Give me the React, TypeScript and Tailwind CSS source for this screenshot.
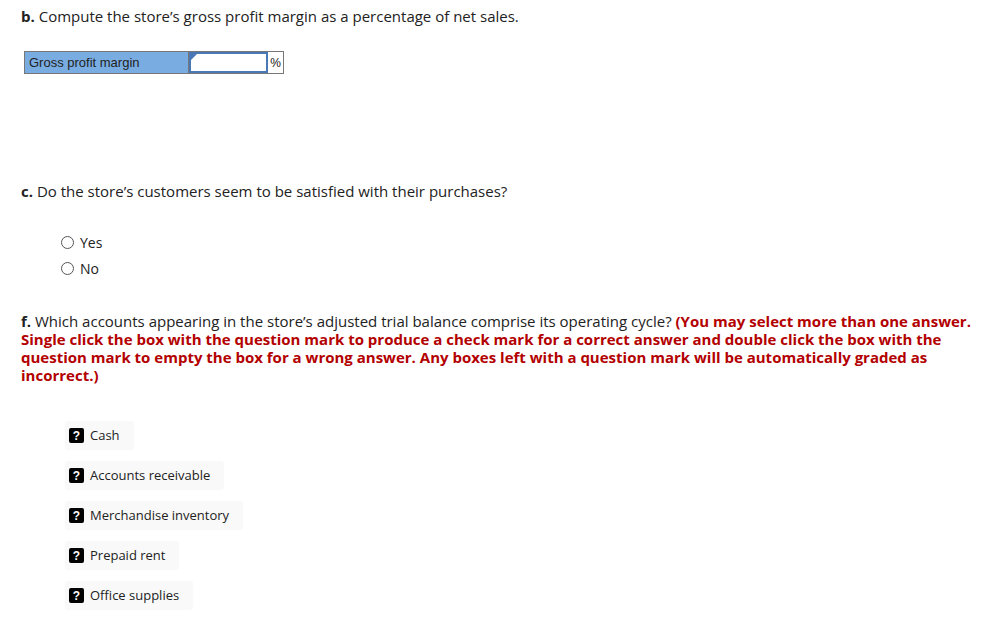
import React from "react";

const font = { fontFamily: "'Open Sans', Lato, sans-serif" };

function Q() {
  return (
    <span className="inline-flex items-center justify-center w-[15px] h-[15px] rounded-[2px] bg-black text-white text-[12px] font-bold leading-none" style={{ fontFamily: "'Liberation Sans', Arial, sans-serif" }}>
      ?
    </span>
  );
}

function Radio({ label }: { label: string }) {
  return (
    <div className="flex items-center h-[26px]">
      <span className="w-[13px] h-[13px] rounded-full border border-[#555] bg-white mr-[6px]" />
      <span className="text-[14px] text-[#222]">{label}</span>
    </div>
  );
}

const items = ["Cash", "Accounts receivable", "Merchandise inventory", "Prepaid rent", "Office supplies"];

export default function App() {
  return (
    <div className="w-[997px] h-[637px] bg-white text-[#222] overflow-hidden" style={font}>
      <div className="pl-[21px] pt-[6px]">
        <p className="text-[15px] leading-[20px]">
          <b>b.</b> Compute the store’s gross profit margin as a percentage of net sales.
        </p>
        <div className="mt-[25px] ml-[3px] flex h-[23px] w-[260px] border border-[#777]" style={{ fontFamily: "'Liberation Sans', Arial, sans-serif" }}>
          <div className="w-[164px] bg-[#79ade2] text-[13px] text-[#222] flex items-center pl-[4px] border-r border-[#777]">Gross profit margin</div>
          <div className="relative w-[79px] border-2 border-[#4a78b5] bg-white">
            <span className="absolute left-0 top-0 w-0 h-0 border-t-[6px] border-t-[#4a78b5] border-r-[6px] border-r-transparent" />
          </div>
          <div className="flex-1 flex items-center justify-center text-[12px] bg-white">%</div>
        </div>

        <p className="mt-[107px] text-[15px] leading-[20px]">
          <b>c.</b> Do the store’s customers seem to be satisfied with their purchases?
        </p>
        <div className="mt-[28px] ml-[40px]">
          <Radio label="Yes" />
          <Radio label="No" />
        </div>

        <div className="mt-[31px] text-[15px] leading-[18px] pr-[20px]">
          <b>f.</b> Which accounts appearing in the store’s adjusted trial balance comprise its operating cycle?{" "}
          <b className="text-[#b30000]">
            (You may select more than one answer. Single click the box with the question mark to produce a check mark for a correct answer and double click the box with the question mark to empty the box for a wrong answer. Any boxes left with a question mark will be automatically graded as incorrect.)
          </b>
        </div>

        <div className="mt-[37px] ml-[44px] flex flex-col gap-[11px]">
          {items.map((it) => (
            <div key={it} className="self-start h-[29px] flex items-center gap-[6px] bg-[#f9f9f9] rounded-[3px] pl-[4px] pr-[14px]">
              <Q />
              <span className="text-[13px] text-[#222]">{it}</span>
            </div>
          ))}
        </div>
      </div>
    </div>
  );
}
